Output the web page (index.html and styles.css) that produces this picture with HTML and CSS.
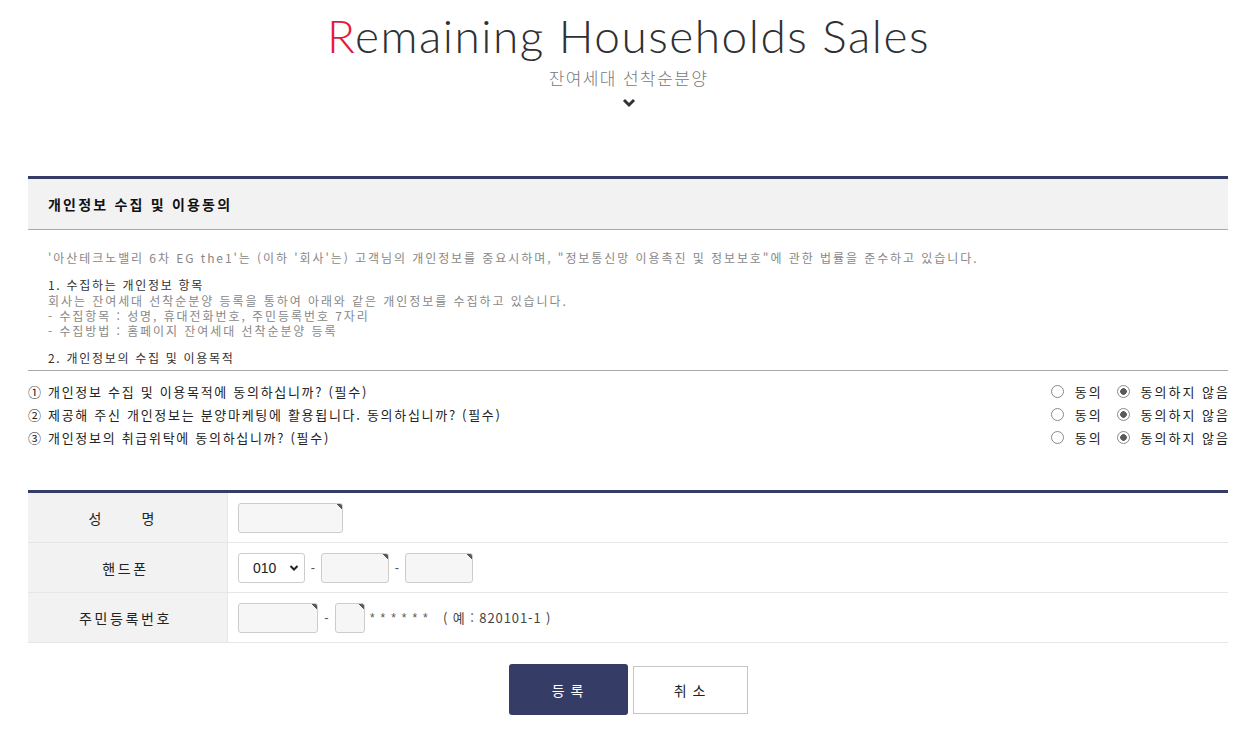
FILE: index.html
```html
<!DOCTYPE html>
<html lang="ko">
<head>
<meta charset="utf-8">
<title>Remaining Households Sales</title>
<link rel="stylesheet" href="styles.css">
</head>
<body>
<header class="hero">
  <h1 class="title"><span class="accent">R</span>emaining Households Sales</h1>
  <p class="subtitle">잔여세대 선착순분양</p>
  <svg class="chevron" width="14" height="10" viewBox="0 0 14 10"><path d="M2 2 L7 7 L12 2" fill="none" stroke="#333" stroke-width="3"/></svg>
</header>

<main class="wrap">
  <section class="agree">
    <h2 class="agree-head">개인정보 수집 및 이용동의</h2>
    <div class="agree-body">
      <p class="intro">'아산테크노밸리 6차 EG the1'는 (이하 '회사'는) 고객님의 개인정보를 중요시하며, "정보통신망 이용촉진 및 정보보호"에 관한 법률을 준수하고 있습니다.</p>
      <p class="sec-title">1. 수집하는 개인정보 항목</p>
      <p class="sec-text">회사는 잔여세대 선착순분양 등록을 통하여 아래와 같은 개인정보를 수집하고 있습니다.<br>- 수집항목 : 성명, 휴대전화번호, 주민등록번호 7자리<br>- 수집방법 : 홈페이지 잔여세대 선착순분양 등록</p>
      <p class="sec-title">2. 개인정보의 수집 및 이용목적</p>
    </div>
    <ul class="consents">
      <li class="consent">
        <span class="q">① 개인정보 수집 및 이용목적에 동의하십니까? (필수)</span>
        <span class="opts">
          <label class="opt"><input type="radio" name="a1"><span>동의</span></label>
          <label class="opt"><input type="radio" name="a1" checked><span>동의하지 않음</span></label>
        </span>
      </li>
      <li class="consent">
        <span class="q">② 제공해 주신 개인정보는 분양마케팅에 활용됩니다. 동의하십니까? (필수)</span>
        <span class="opts">
          <label class="opt"><input type="radio" name="a2"><span>동의</span></label>
          <label class="opt"><input type="radio" name="a2" checked><span>동의하지 않음</span></label>
        </span>
      </li>
      <li class="consent">
        <span class="q">③ 개인정보의 취급위탁에 동의하십니까? (필수)</span>
        <span class="opts">
          <label class="opt"><input type="radio" name="a3"><span>동의</span></label>
          <label class="opt"><input type="radio" name="a3" checked><span>동의하지 않음</span></label>
        </span>
      </li>
    </ul>
  </section>

  <section class="form">
    <div class="row">
      <div class="label spaced">성&emsp;&emsp;명</div>
      <div class="field"><input class="inp w104" type="text"></div>
    </div>
    <div class="row">
      <div class="label">핸드폰</div>
      <div class="field">
        <span class="select">010<svg width="10" height="8" viewBox="0 0 10 8"><path d="M1.5 2 L5 5.5 L8.5 2" fill="none" stroke="#222" stroke-width="2"/></svg></span>
        <span class="dash">-</span>
        <input class="inp w67" type="text">
        <span class="dash">-</span>
        <input class="inp w67" type="text">
      </div>
    </div>
    <div class="row">
      <div class="label">주민등록번호</div>
      <div class="field">
        <input class="inp w79" type="text">
        <span class="dash wide">-</span>
        <input class="inp w29" type="text">
        <span class="mask">* * * * * *</span>
        <span class="example">( 예 : 820101-1 )</span>
      </div>
    </div>
  </section>

  <div class="buttons">
    <button class="btn primary" type="button">등 록</button>
    <button class="btn secondary" type="button">취 소</button>
  </div>
</main>
</body>
</html>
```

FILE: styles.css
```css
* { box-sizing: border-box; }
body {
  margin: 0;
  font-family: "Noto Sans CJK KR", "Noto Sans", sans-serif;
  color: #222;
  background: #fff;
}
p, h1, h2, ul { margin: 0; padding: 0; }
ul { list-style: none; }

.hero {
  display: flex;
  flex-direction: column;
  align-items: center;
  padding-top: 7px;
  padding-left: 11px;
}
.title {
  font-family: Lato, "Open Sans", sans-serif;
  font-weight: 300;
  font-size: 46px;
  line-height: 58px;
  color: #2f3033;
  letter-spacing: 1.5px;
}
.accent { color: #e8183c; }
.subtitle {
  margin-top: 0;
  font-size: 17px;
  line-height: 26px;
  color: #777;
  font-weight: 300;
  letter-spacing: 1.4px;
}
.chevron { margin-top: 7px; display: block; }

.wrap {
  margin: 68px 18px 0 28px;
}

.agree { border-top: 3px solid #353d66; }
.agree-head {
  background: #f2f2f2;
  height: 51px;
  line-height: 50px;
  padding-left: 20px;
  font-size: 14px;
  font-weight: 700;
  color: #111;
  letter-spacing: 2.2px;
  border-bottom: 1px solid #aaa;
}
.agree-body {
  height: 141px;
  overflow: hidden;
  padding: 20px 20px 0;
  border-bottom: 1px solid #aaa;
  font-size: 12px;
  line-height: 15px;
  letter-spacing: 1.93px;
  color: #888;
}
.intro { margin-bottom: 11px; }
.sec-title { color: #333; line-height: 17px; letter-spacing: 1.7px; }
.sec-text { margin-bottom: 11px; }

.consents { padding-top: 9px; }
.consent {
  display: flex;
  justify-content: space-between;
  align-items: center;
  height: 23px;
  font-size: 13px;
  letter-spacing: 1.7px;
  color: #222;
}
.opts { display: flex; gap: 16px; }
.opt { display: flex; align-items: center; gap: 11px; }
.opt span { letter-spacing: 2px; margin-right: -2px; }
.opt input {
  appearance: none;
  margin: 0;
  width: 13px;
  height: 13px;
  border: 1px solid #8a8a8a;
  border-radius: 50%;
  background: #fff;
}
.opt input:checked {
  background: radial-gradient(circle, #5a5a5a 0 3px, #fff 3.6px);
}

.form {
  margin-top: 41px;
  border-top: 3px solid #353d66;
}
.row {
  display: flex;
  height: 50px;
  border-bottom: 1px solid #e6e6e6;
}
.label {
  width: 200px;
  background: #f2f2f2;
  border-right: 1px solid #e6e6e6;
  display: flex;
  align-items: center;
  justify-content: center;
  font-size: 14px;
  letter-spacing: 2.6px;
  padding-right: 4px;
  color: #222;
}
.label.spaced { letter-spacing: 4px; padding-right: 8px; }
.field {
  flex: 1;
  display: flex;
  align-items: center;
  padding-left: 10px;
  font-size: 13px;
  color: #555;
}
.inp {
  height: 30px;
  border: 1px solid #ccc;
  border-radius: 3px;
  background: linear-gradient(225deg, #555a4e 0 4px, transparent 4px), #f6f6f6;
  font: inherit;
  padding: 0 6px;
}
.w104 { width: 105px; }
.w67 { width: 68px; }
.w79 { width: 80px; }
.w29 { width: 30px; }
.select {
  width: 67px;
  height: 30px;
  border: 1px solid #ccc;
  border-radius: 3px;
  background: #fff;
  display: flex;
  align-items: center;
  justify-content: space-between;
  padding: 0 5px 0 14px;
  font-family: "Liberation Sans", Arial, sans-serif;
  font-size: 14px;
  color: #222;
}
.dash {
  width: 16px;
  text-align: center;
  font-family: "Liberation Sans", Arial, sans-serif;
  color: #555;
}
.dash.wide { width: 17px; }
.mask {
  margin-left: 5px;
  font-family: "Liberation Sans", Arial, sans-serif;
  font-size: 12px;
  color: #555;
  letter-spacing: 1.3px;
}
.example {
  margin-left: 14px;
  font-size: 13px;
  letter-spacing: 0.9px;
  color: #444;
}

.buttons {
  display: flex;
  justify-content: center;
  align-items: center;
  gap: 5px;
  margin-top: 21px;
}
.btn {
  font-family: "Noto Sans CJK KR", sans-serif;
  font-size: 14px;
  letter-spacing: 1px;
  cursor: pointer;
}
.btn.primary {
  width: 119px;
  height: 51px;
  background: #353d66;
  color: #fff;
  border: none;
  border-radius: 3px;
}
.btn.secondary {
  width: 115px;
  height: 48px;
  background: #fff;
  color: #222;
  border: 1px solid #c5c5c5;
}
```
